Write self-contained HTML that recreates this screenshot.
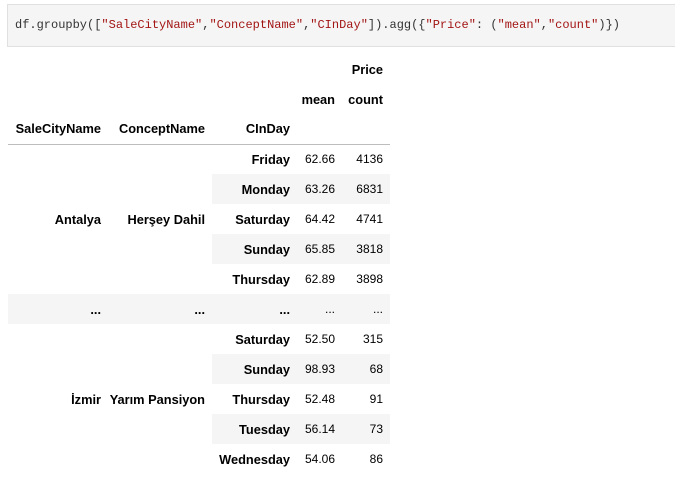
<!DOCTYPE html>
<html><head><meta charset="utf-8"><style>
body{margin:0;background:#fff;width:675px;height:492px;overflow:hidden;font-family:"Liberation Sans",sans-serif;}
.code{position:absolute;left:7px;top:4px;width:670px;height:43px;background:#f5f5f5;border:1px solid #e0e0e0;box-sizing:border-box;font-family:"Liberation Mono",monospace;font-size:12px;line-height:41px;padding-left:7px;color:#333;white-space:pre;}
.s{color:#a31515}
table{position:absolute;left:8px;top:54px;border-collapse:collapse;font-size:12px;color:#000;table-layout:fixed;}
td,th{height:30px;padding:0 7px 0 0;text-align:right;white-space:nowrap;box-sizing:border-box;}
th{font-weight:bold;font-size:12.8px;}
td{font-weight:normal;}
tr.h3 th{border-bottom:1px solid #bdbdbd;}
.st{background:#f5f5f5}
</style></head><body>
<div class="code">df.groupby([<span class="s">"SaleCityName"</span>,<span class="s">"ConceptName"</span>,<span class="s">"CInDay"</span>]).agg({<span class="s">"Price"</span>: (<span class="s">"mean"</span>,<span class="s">"count"</span>)})</div>
<table>
<colgroup><col style="width:100px"><col style="width:104px"><col style="width:85px"><col style="width:45px"><col style="width:48px"></colgroup>
<tr><th></th><th></th><th></th><th colspan="2">Price</th></tr>
<tr><th></th><th></th><th></th><th>mean</th><th>count</th></tr>
<tr class="h3"><th>SaleCityName</th><th>ConceptName</th><th>CInDay</th><th></th><th></th></tr>
<tr><th rowspan="5">Antalya</th><th rowspan="5">Herşey Dahil</th><th>Friday</th><td>62.66</td><td>4136</td></tr>
<tr class="st"><th>Monday</th><td>63.26</td><td>6831</td></tr>
<tr><th>Saturday</th><td>64.42</td><td>4741</td></tr>
<tr class="st"><th>Sunday</th><td>65.85</td><td>3818</td></tr>
<tr><th>Thursday</th><td>62.89</td><td>3898</td></tr>
<tr class="st"><th>...</th><th>...</th><th>...</th><td>...</td><td>...</td></tr>
<tr><th rowspan="5">İzmir</th><th rowspan="5">Yarım Pansiyon</th><th>Saturday</th><td>52.50</td><td>315</td></tr>
<tr class="st"><th>Sunday</th><td>98.93</td><td>68</td></tr>
<tr><th>Thursday</th><td>52.48</td><td>91</td></tr>
<tr class="st"><th>Tuesday</th><td>56.14</td><td>73</td></tr>
<tr><th>Wednesday</th><td>54.06</td><td>86</td></tr>
</table>
</body></html>
